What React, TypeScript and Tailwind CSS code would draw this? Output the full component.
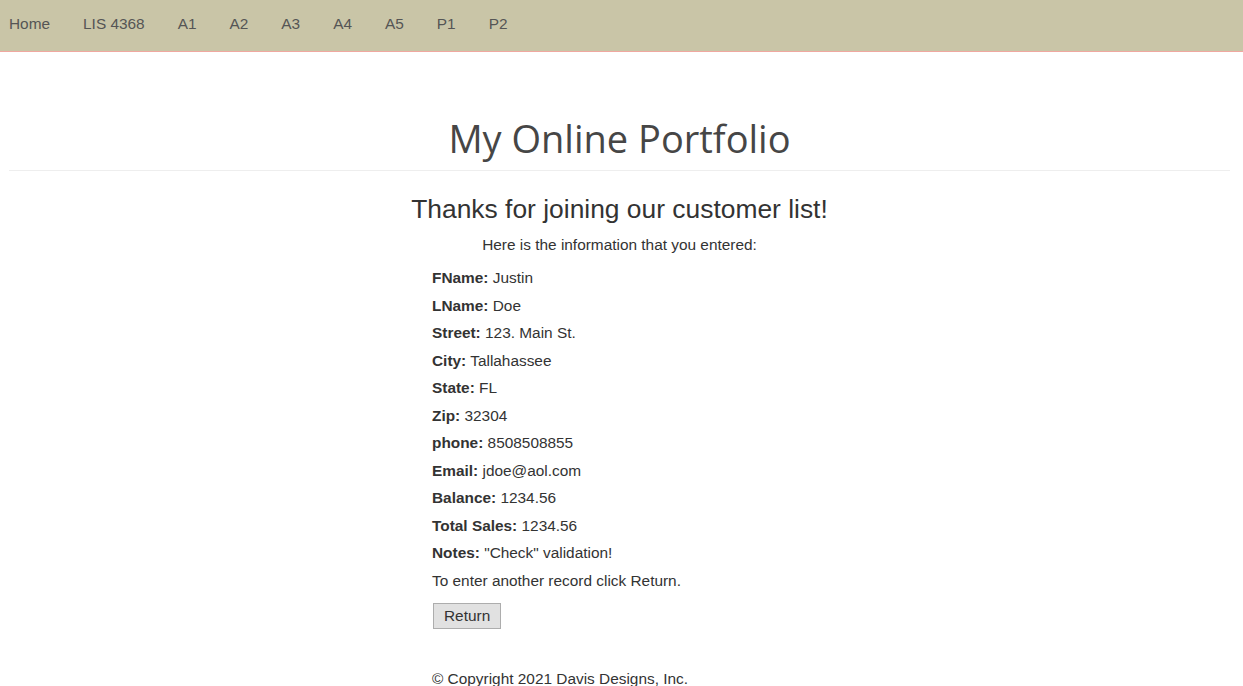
import React from 'react';

const navItems = ['Home', 'LIS 4368', 'A1', 'A2', 'A3', 'A4', 'A5', 'P1', 'P2'];

const rows: [string, string][] = [
  ['FName:', 'Justin'],
  ['LName:', 'Doe'],
  ['Street:', '123. Main St.'],
  ['City:', 'Tallahassee'],
  ['State:', 'FL'],
  ['Zip:', '32304'],
  ['phone:', '8508508855'],
  ['Email:', 'jdoe@aol.com'],
  ['Balance:', '1234.56'],
  ['Total Sales:', '1234.56'],
  ['Notes:', '"Check" validation!'],
];

export default function App() {
  return (
    <div className="min-h-screen bg-white text-[#333] font-['Liberation_Sans',Arial,sans-serif] text-[15.4px]">
      <nav className="h-[52px] bg-[#c9c5a7] border-b border-[#f0a8a0] flex items-center pl-[9px] pb-[4px] gap-[33px] text-[#555]">
        {navItems.map((item) => (
          <a key={item} href="#" className="leading-[20px]">
            {item}
          </a>
        ))}
      </nav>

      <div className="ml-[9px] mr-[13px] mt-[62px] pb-[12px] border-b border-[#eee]">
        <h1 className="text-center text-[38px] leading-[44px] text-[#464646] font-['Open_Sans',sans-serif] translate-y-[2px]">
          My Online Portfolio
        </h1>
      </div>

      <div className="ml-[9px] mr-[13px]">
        <h2 className="mt-[22px] text-center text-[26.4px] leading-[32px] whitespace-nowrap">
          Thanks for joining our customer list!
        </h2>
        <p className="mt-[10px] text-center leading-[20px]">Here is the information that you entered:</p>
      </div>

      <div className="w-[379px] mx-auto">
        <div className="mt-[9px]">
          {rows.map(([label, value]) => (
            <div key={label} className="leading-[27.5px]">
              <b>{label}</b> {value}
            </div>
          ))}
          <div className="leading-[27.5px]">To enter another record click Return.</div>
        </div>

        <button className="mt-[9px] ml-px h-[26px] px-[10px] bg-[#e1e1e1] border border-[#adadad] leading-[20px]">
          Return
        </button>

        <p className="mt-[40px] leading-[20px]">© Copyright 2021 Davis Designs, Inc.</p>
      </div>
    </div>
  );
}
